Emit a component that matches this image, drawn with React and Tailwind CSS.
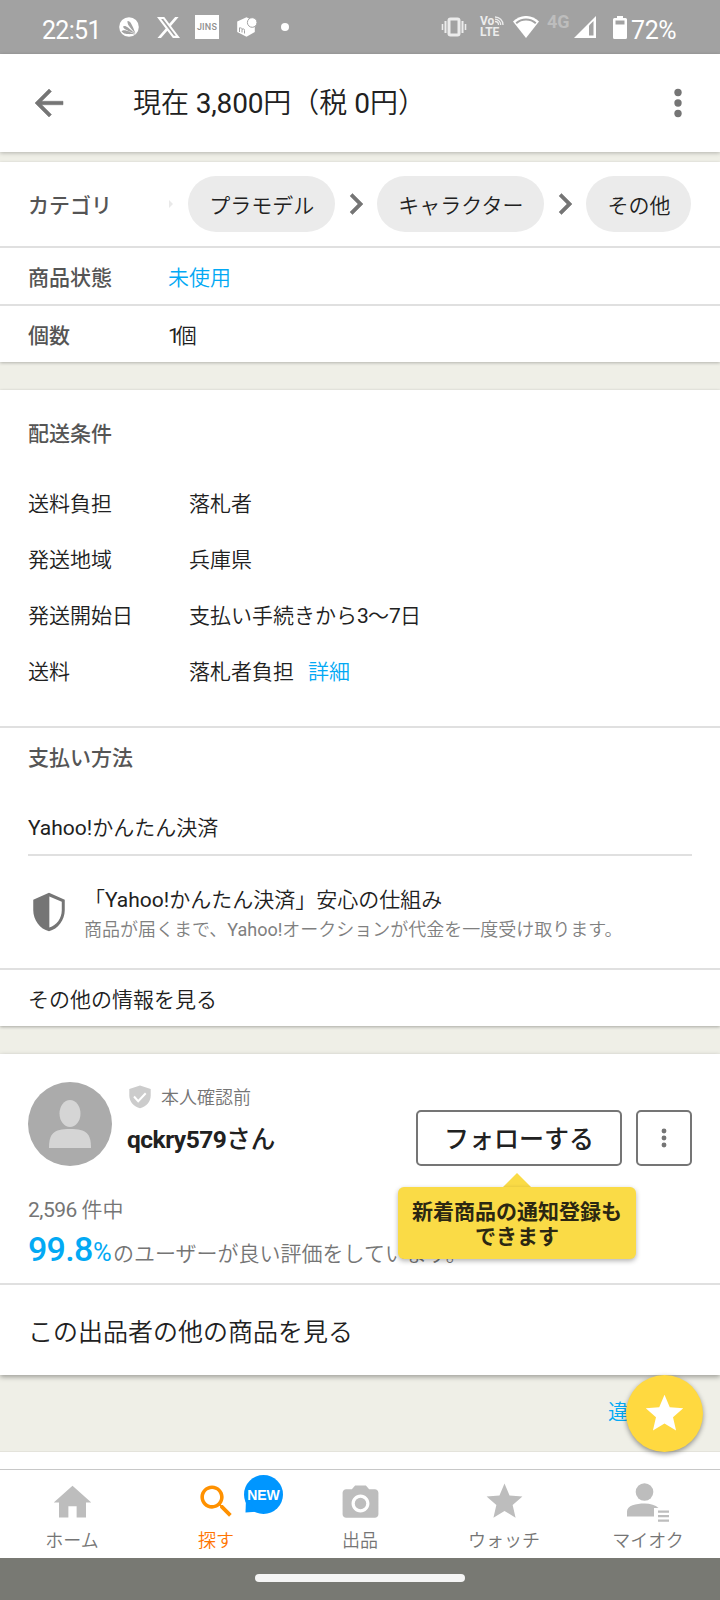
import { clsx } from 'clsx';

const BackIcon = () => (
  <svg viewBox="0 0 24 24" className="size-[42px] fill-[#757575]">
    <path d="M20 11H7.830l5.590-5.590L12 4l-8 8 8 8 1.410-1.410L7.830 13H20v-2z" stroke="#757575" strokeWidth=".3" />
  </svg>
);

const MoreIcon = ({ className }) => (
  <svg viewBox="0 0 24 24" className={clsx('fill-[#757575]', className)}>
    <circle cx="12" cy="6" r="2.1" />
    <circle cx="12" cy="12" r="2.1" />
    <circle cx="12" cy="18" r="2.1" />
  </svg>
);

const ChevronIcon = () => (
  <svg viewBox="0 0 24 24" className="size-[42px] shrink-0 fill-[#757575]">
    <path d="M10 6L8.590 7.410 13.170 12l-4.580 4.590L10 18l6-6z" stroke="#757575" strokeWidth=".3" />
  </svg>
);

const StarIcon = ({ className }) => (
  <svg viewBox="0 0 24 24" className={className}>
    <path d="M12 17.27L18.18 21l-1.64-7.03L22 9.24l-7.19-.61L12 2 9.19 8.63 2 9.24l5.46 4.73L5.82 21z" />
  </svg>
);

// Latin text needs a heavier weight than the light Japanese around it
const Latin = ({ className, children }) => <span className={clsx('font-normal', className)}>{children}</span>;

const StatusBar = () => (
  <div className="flex h-[54px] shrink-0 items-center bg-[#a2a2a2] pl-[42px] font-normal text-white">
    <span className="w-[77px] pt-1.5 text-[25px] leading-none tracking-[-0.7px]">22:51</span>
    <svg viewBox="0 0 20 20" className="size-5">
      <circle cx="10" cy="10" r="9.8" fill="#fff" />
      <path d="M2.500 14.500C4.500 12 8 13.500 16.500 17.500C10 17 6 18 2.500 14.500zM4 9.500c2-1.500 4-.5 12.500 7.500C9 13.500 4.500 12.500 4 9.500zM8.500 4c2.500-.5 4.500 3 8 12.500C11 10.500 8 7.500 8.500 4z" fill="#a2a2a2" />
    </svg>
    <svg viewBox="0 0 24 24" className="ml-[18px] size-[23px] fill-white">
      <path d="M18.901 1.153h3.680l-8.040 9.190L24 22.846h-7.406l-5.800-7.584-6.638 7.584H.474l8.600-9.830L0 1.154h7.594l5.243 6.932ZM17.610 20.644h2.039L6.486 3.240H4.298Z" />
    </svg>
    <span className="ml-[15px] flex size-6 items-center justify-center bg-white text-[9px] leading-none font-medium tracking-[0.2px] text-[#8f8f8f]">JINS</span>
    <svg viewBox="0 0 22 22" className="ml-[17px] size-[22px]">
      <path d="M10.500 1.200L1.200 5.500v10.500l9.300 4.800 8.300-4.800V5.500z" fill="#fff" />
      <circle cx="16.200" cy="6.500" r="4.800" fill="#fff" stroke="#a2a2a2" strokeWidth="1" />
      <path d="M3.500 16v-4.500M3.500 12.500c1.500-1.300 2.500-.5 2.500 1v3M6 13.500c1.500-1.300 2.500-.5 2.500 1v3" fill="none" stroke="#a2a2a2" />
    </svg>
    <span className="ml-[23px] size-2 rounded-full bg-white" />
    <svg viewBox="0 0 26 20" className="ml-[152px] h-5 w-[26px]" fill="none" stroke="#ececec">
      <rect x="8" y="2" width="10" height="16" rx="1.500" strokeWidth="3" />
      <path d="M4.500 4v12M21.500 4v12" strokeWidth="2" />
      <path d="M1.500 7v6M24.500 7v6" strokeWidth="1.600" />
    </svg>
    <span className="relative ml-[13px] flex w-6 flex-col text-[12px] leading-[11.5px] font-bold text-[#ececec]">
      <span>Vo</span>
      <span>LTE</span>
      <svg viewBox="0 0 10 10" className="absolute top-0 right-0 size-2.5" fill="none" stroke="#ececec" strokeWidth="1.300">
        <path d="M1 5.500c2 0 3.500 1.500 3.500 3.500M1 3.200c3.200 0 5.700 2.600 5.700 5.800M1 1c4.500 0 8 3.500 8 8" />
      </svg>
    </span>
    <svg viewBox="0 0 26 22" className="mb-px ml-[9px] h-[22px] w-[26px]">
      <path d="M13 22L0 5.600C7.500-1.900 18.500-1.900 26 5.600z" fill="#fff" />
      <path d="M3.200 7.200c5.500-5 14.100-5 19.600 0" fill="none" stroke="#a2a2a2" strokeWidth="2" />
    </svg>
    <span className="mb-2.5 ml-2 w-[27px] text-[18px] leading-none font-bold text-[#bdbdbd]">4G</span>
    <svg viewBox="0 0 22 22" className="mb-px size-[22px]">
      <path d="M22 0v22H0z" fill="#fff" />
      <path d="M15 9.500l4.500-4.500v14.500H15z" fill="#a2a2a2" />
    </svg>
    <svg viewBox="0 0 14 23" className="ml-[17px] h-[23px] w-3.5">
      <path d="M4 0h6v2h2.500q1.500 0 1.500 1.500v18q0 1.500-1.500 1.500h-11Q0 23 0 21.500v-18Q0 2 1.500 2H4z" fill="#fff" />
      <path d="M2.500 4.500h9v4h-9z" fill="#a2a2a2" />
    </svg>
    <span className="ml-1 pt-1.5 text-[25px] leading-none tracking-[-0.4px]">72%</span>
  </div>
);

const categories = ['プラモデル', 'キャラクター', 'その他'];

const CategoryRow = () => (
  <div className="flex h-[86px] items-center border-b-2 border-[#e0e0e0] pr-7 pl-7">
    <span className="w-[141.3px] shrink-0 pt-[3px] font-medium text-[#555]">カテゴリ</span>
    <svg viewBox="0 0 4 8" className="mr-[15px] h-2 w-1 shrink-0 fill-[#e9e9e9]">
      <path d="M0 0l4 4-4 4z" />
    </svg>
    <div className="flex flex-1 items-center">
      {categories.map((name, i) => (
        <div key={name} className="flex shrink-0 items-center">
          {i > 0 && <ChevronIcon />}
          <span className="flex h-14 items-center rounded-full bg-[#ebebeb] px-[21px] pt-[3px]">{name}</span>
        </div>
      ))}
    </div>
  </div>
);

const shipping = [
  { label: '送料負担', value: '落札者' },
  { label: '発送地域', value: '兵庫県' },
  {
    label: '発送開始日',
    value: (
      <>
        支払い手続きから<Latin className="tracking-[-0.8px]">3</Latin>〜<Latin className="tracking-[-0.8px]">7</Latin>日
      </>
    ),
  },
  { label: '送料', value: '落札者負担', link: '詳細' },
];

const ShippingSection = () => (
  <div className="h-[338px] border-b-2 border-[#e0e0e0] px-7 pt-7">
    <h2 className="font-medium text-[#555]">配送条件</h2>
    <dl className="mt-[26px] flex flex-col">
      {shipping.map(({ label, value, link }) => (
        <div key={label} className="flex h-14 items-center">
          <dt className="w-[161px]">{label}</dt>
          <dd>
            {value}
            {link && <a className="ml-3.5 text-[#03a9f4]">{link}</a>}
          </dd>
        </div>
      ))}
    </dl>
  </div>
);

const PaymentSection = () => (
  <div className="h-[242px] border-b-2 border-[#e0e0e0] px-7 pt-3.5">
    <h2 className="font-medium text-[#555]">支払い方法</h2>
    <p className="mt-[38px] border-b-2 border-[#e0e0e0] pb-[10px]">
      <Latin>Yahoo!</Latin>かんたん決済
    </p>
    <div className="flex items-start pt-[29px]">
      <svg viewBox="0 0 24 24" className="mt-[6px] size-[42px] fill-[#757575]">
        <path fillRule="evenodd" d="M12 1L3 5v6c0 5.550 3.840 10.740 9 12 5.160-1.260 9-6.450 9-12V5zM12.200 3.200l7.100 3V11c0 4.600-3 8.700-7.100 9.900z" />
      </svg>
      <div className="ml-3.5">
        <p className="leading-[30px]">
          「<Latin>Yahoo!</Latin>かんたん決済」安心の仕組み
        </p>
        <p className="text-[18px] leading-[29px] text-[#808080]">
          商品が届くまで、<Latin>Yahoo!</Latin>オークションが代金を一度受け取ります。
        </p>
      </div>
    </div>
  </div>
);

const Tooltip = () => (
  <div className="absolute top-[119px] left-[398px] flex flex-col items-center">
    <svg viewBox="0 0 28 14" className="h-3.5 w-7 fill-[#fadb46]">
      <path d="M14 0l14 14H0z" />
    </svg>
    <div className="h-[72px] w-[238px] rounded-md bg-[#fadb46] pt-[13px] text-center leading-[24.500px] font-bold text-[#2b2712] shadow-[0_2px_5px_rgba(0,0,0,0.3)]">
      新着商品の通知登録も
      <br />
      できます
    </div>
  </div>
);

const SellerSection = () => (
  <section className="relative bg-white shadow-[0_2px_5px_rgba(0,0,0,0.35)]">
    <div className="h-[231px] border-b-2 border-[#e0e0e0] px-7 pt-7">
      <div className="flex h-[84px]">
        <svg viewBox="0 0 84 84" className="size-[84px]">
          <circle cx="42" cy="42" r="42" fill="#ababab" />
          <ellipse cx="42" cy="31.500" rx="10.500" ry="13.500" fill="#d5d5d5" />
          <path d="M21 66c0-14 4-19 21-19s21 5 21 19z" fill="#d5d5d5" />
        </svg>
        <div className="ml-[15px] flex-1">
          <p className="flex h-[30px] items-center text-[18px] text-[#757575]">
            <svg viewBox="0 0 22 24" className="mr-2.5 ml-[2px] h-6 w-[22px]">
              <path d="M11 .500L.300 4v6.500C.300 17 5 21.500 11 23.300c6-1.800 10.700-6.300 10.700-12.800V4z" fill="#ccc" />
              <path d="M5 11.500l4.200 4.700 7.500-8" fill="none" stroke="#fff" strokeWidth="2" />
            </svg>
            <span className="pt-0.5">本人確認前</span>
          </p>
          <p className="mt-2.5 text-[24.500px] leading-[36px] font-medium">
            <span className="font-bold tracking-[-0.500px]">qckry579</span>さん
          </p>
        </div>
        <button className="mt-7 h-14 w-[206px] rounded-[5px] border-2 border-[#757575] pt-1 text-[25px] font-medium">フォローする</button>
        <button className="mt-7 ml-3.5 flex size-14 items-center justify-center rounded-[5px] border-2 border-[#757575]">
          <MoreIcon className="size-7" />
        </button>
      </div>
      <p className="mt-[28px] text-[#757575]">
        <Latin className="tracking-[-0.500px]">2,596 </Latin>件中
      </p>
      <p className="flex items-baseline pt-0.5 leading-[42px] text-[#757575]">
        <span className="w-[65px] text-[34px] font-medium tracking-[-0.700px] text-[#03a9f4]">99.8</span>
        <Latin className="w-5 text-[25.500px] text-[#03a9f4]">%</Latin>
        <span>のユーザーが良い評価をしています。</span>
      </p>
    </div>
    <p className="flex h-[90px] items-center px-7 pt-[5px] text-[25px]">この出品者の他の商品を見る</p>
    <Tooltip />
  </section>
);

const FavoriteButton = () => (
  <button className="absolute top-0 right-[17px] flex size-[77px] items-center justify-center rounded-full bg-[#ffd940] shadow-[0_2px_5px_rgba(0,0,0,0.4)]">
    <StarIcon className="size-[45px] fill-white" />
  </button>
);

const NewBadge = () => (
  <span className="absolute top-[5px] left-[100px] flex size-[39px] items-center justify-center">
    <svg viewBox="0 0 39 39" className="absolute inset-0 fill-[#0096ff]">
      <circle cx="19.500" cy="19.500" r="19.500" />
      <path d="M2 24l-.500 13.500L14 36.500z" />
    </svg>
    <span className="relative font-['Liberation_Sans',sans-serif] text-[14px] leading-none font-bold text-white">NEW</span>
  </span>
);

const tabs = [
  {
    label: 'ホーム',
    icon: (
      <svg viewBox="0 0 24 24" className="mt-0.5 size-[45px] fill-[#bdbdbd]">
        <path d="M9.800 20v-6h4.400v6h5v-8H22L12 3 2 12h2.800v8z" />
      </svg>
    ),
  },
  {
    label: '探す',
    active: true,
    icon: (
      <svg viewBox="0 0 24 24" className="size-[43px] fill-[#ff9100]">
        <path d="M15.500 14h-.790l-.280-.270C15.410 12.590 16 11.110 16 9.500 16 5.910 13.090 3 9.500 3S3 5.910 3 9.500 5.910 16 9.500 16c1.610 0 3.090-.590 4.230-1.570l.270.280v.790l5 4.990L20.490 19l-4.990-5zm-6 0C7.010 14 5 11.990 5 9.500S7.010 5 9.500 5 14 7.010 14 9.500 11.990 14 9.500 14z" />
      </svg>
    ),
  },
  {
    label: '出品',
    icon: (
      <svg viewBox="0 0 24 24" className="mt-1 size-[43px] fill-[#bdbdbd]">
        <circle cx="12" cy="12" r="3.200" />
        <path d="M9 2L7.170 4H4c-1.100 0-2 .900-2 2v12c0 1.100.900 2 2 2h16c1.100 0 2-.900 2-2V6c0-1.100-.900-2-2-2h-3.170L15 2H9zm3 15c-2.760 0-5-2.240-5-5s2.240-5 5-5 5 2.240 5 5-2.240 5-5 5z" />
      </svg>
    ),
  },
  { label: 'ウォッチ', icon: <StarIcon className="size-[43px] fill-[#bdbdbd]" /> },
  {
    label: 'マイオク',
    icon: (
      <svg viewBox="0 0 42 42" className="size-[42px] fill-[#bdbdbd]">
        <circle cx="17.500" cy="11" r="8.800" />
        <path d="M0 35.500v-5C0 24.500 9 22.500 17.500 22.500c6 0 11 1.500 14 4.500h-4.500v8.500z" />
        <path d="M31 29.500h11v2.300H31zM31 34h11v2.300H31zM31 38.500h11v2.300H31z" />
      </svg>
    ),
  },
];

const TabBar = () => (
  <nav className="grid h-[89px] shrink-0 grid-cols-5 border-t border-[#c8c8c8] bg-white">
    {tabs.map(({ label, active, icon }) => (
      <a key={label} className={clsx('relative flex flex-col items-center text-[18px]', active ? 'text-[#ff7400]' : 'text-[#757575]')}>
        <span className="flex h-[63px] items-center">{icon}</span>
        <span className="-mt-[7px] leading-[30px]">{label}</span>
        {active && <NewBadge />}
      </a>
    ))}
  </nav>
);

const App = () => (
  <div className="flex h-[1600px] w-[720px] flex-col overflow-hidden bg-[#efefe7] font-['Roboto','Noto_Sans_CJK_JP',sans-serif] text-[21px] leading-[32px] font-[350] text-[#212121]">
    <StatusBar />
    <header className="relative flex h-[98px] shrink-0 items-center bg-white px-7 shadow-[0_1px_4px_rgba(0,0,0,0.25)]">
      <BackIcon />
      <h1 className="ml-[63px] flex-1 pt-0.5 text-[28px]">
        現在<Latin className="tracking-[-0.2px]"> 3,800</Latin>円（税<Latin> 0</Latin>円）
      </h1>
      <MoreIcon className="-mr-[7px] size-[42px]" />
    </header>
    <main className="flex-1">
      <section className="mt-2.5 bg-white shadow-[0_1px_3px_rgba(0,0,0,0.25)]">
        <CategoryRow />
        <div className="flex h-[58px] items-center border-b-2 border-[#e0e0e0] px-7 pt-[3px]">
          <span className="w-[140px] font-medium text-[#555]">商品状態</span>
          <a className="text-[#03a9f4]">未使用</a>
        </div>
        <div className="flex h-14 items-center px-7 pt-[3px]">
          <span className="w-[140px] font-medium text-[#555]">個数</span>
          <span>
            <Latin className="tracking-[-4px]">1</Latin>個
          </span>
        </div>
      </section>
      <section className="mt-7 bg-white shadow-[0_1px_3px_rgba(0,0,0,0.3)]">
        <ShippingSection />
        <PaymentSection />
        <p className="flex h-14 items-center px-7 pt-[3px]">その他の情報を見る</p>
      </section>
      <div className="h-7" />
      <SellerSection />
      <div className="relative flex h-[77px] items-center justify-end border-b border-[#e4e3db] px-7 pb-0.5">
        <a className="text-[#03a9f4]">違反申告</a>
        <FavoriteButton />
      </div>
      <div className="h-[17px] bg-white" />
    </main>
    <TabBar />
    <div className="flex h-[42px] shrink-0 items-center justify-center bg-[#787973] pb-0.5">
      <span className="h-2 w-[210px] rounded-full bg-[#f5f5f5]" />
    </div>
  </div>
);

export default App;
